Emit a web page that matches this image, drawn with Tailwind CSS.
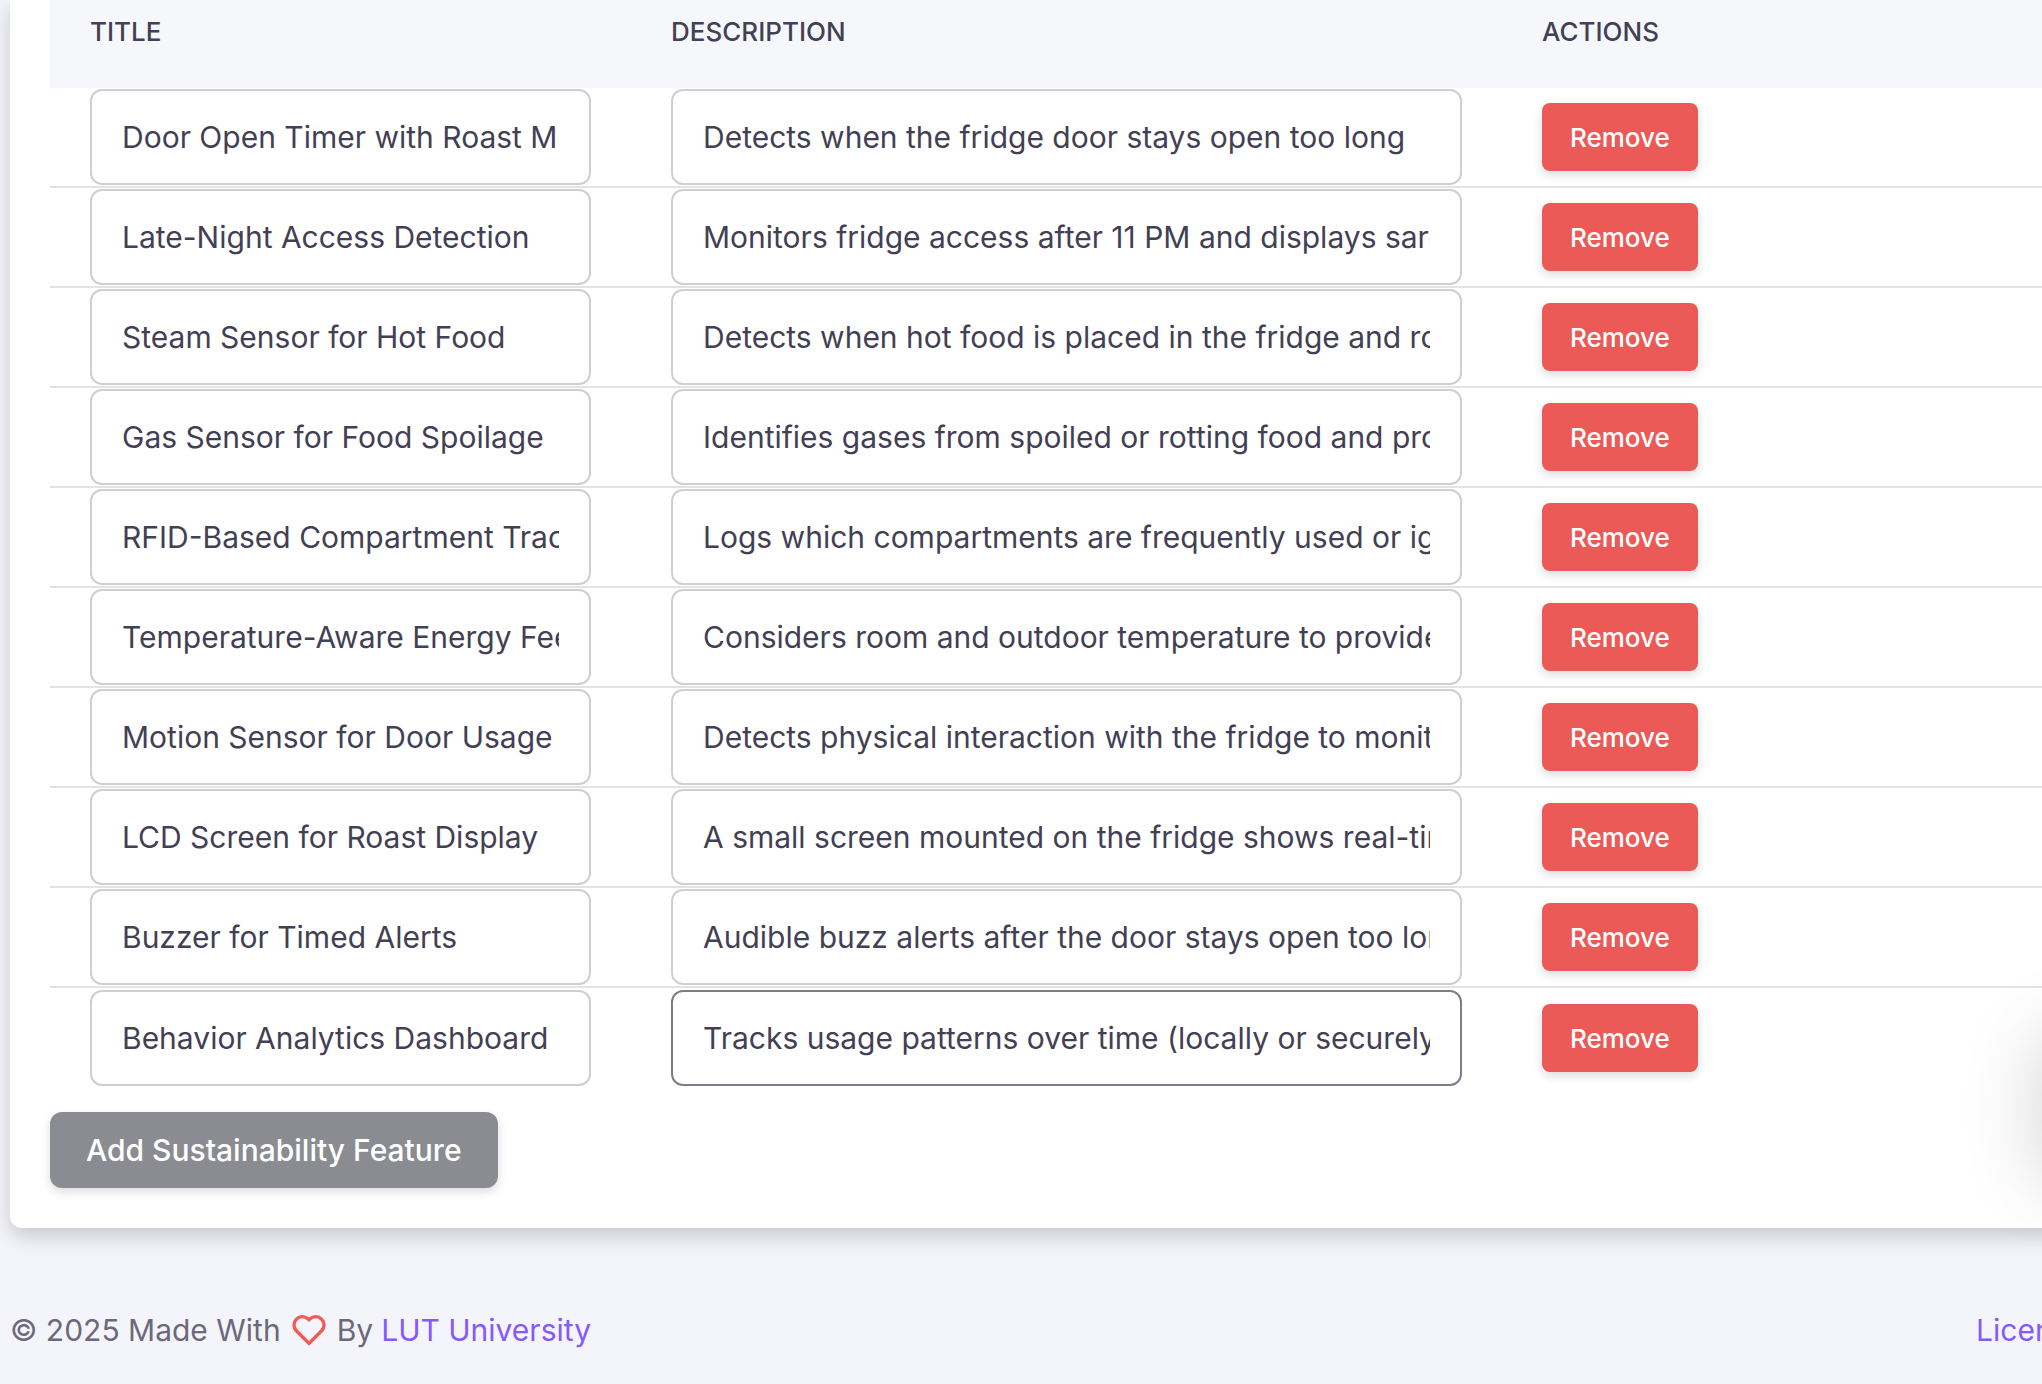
<!DOCTYPE html>
<html lang="en">
<head>
  <meta charset="UTF-8" />
  <meta name="viewport" content="width=device-width, initial-scale=1.0" />
  <title>Sustainability Features</title>
  <script src="https://cdn.jsdelivr.net/npm/@tailwindcss/browser@4"></script>
</head>
<body class="relative min-h-screen overflow-x-hidden bg-[#f4f5fa] font-['Inter',sans-serif] text-[#433f54]">
  <!-- the page is wider than the window, so it runs off the right edge -->
  <div class="-mr-11 pl-[10px]">
    <main class="rounded-b-xl bg-white px-10 pb-10 shadow-[0_8px_20px_rgba(46,38,61,0.22)]">
      <table class="w-full table-fixed border-separate border-spacing-0">
        <colgroup>
          <col class="w-[581px]" />
          <col class="w-[871px]" />
          <col />
        </colgroup>
        <thead class="bg-[#f6f7fb]">
          <tr class="h-[88px] text-left align-top text-[26px] leading-8 uppercase">
            <th class="px-10 pt-4 font-medium">Title</th>
            <th class="px-10 pt-4 font-medium">Description</th>
            <th class="px-10 pt-4 font-medium">Actions</th>
          </tr>
        </thead>
        <tbody id="features"></tbody>
      </table>
      <button type="button" class="mt-6 h-[76px] rounded-xl bg-[#8b8c92] px-9 text-[30px] font-medium text-white shadow-[0_4px_10px_rgba(46,38,61,0.16)]">Add Sustainability Feature</button>
    </main>

    <footer class="flex items-center justify-between pt-20 text-[30px] leading-[44px] text-[#6d687b]">
      <p class="flex items-center gap-2">
        <span>© 2025 Made With</span>
        <svg class="size-10 text-[#f05b56]" viewBox="0 0 24 24" fill="currentColor" aria-hidden="true">
          <path d="M12.001 4.529a5.998 5.998 0 0 1 8.242.228 6 6 0 0 1 .236 8.236l-8.48 8.492-8.478-8.492a6 6 0 0 1 8.48-8.464Zm6.826 1.641a3.998 3.998 0 0 0-5.49-.153l-1.335 1.198-1.336-1.197a4 4 0 0 0-5.686 5.605L12 18.654l7.02-7.03a4 4 0 0 0-.193-5.454Z" />
        </svg>
        <span>By</span>
        <a href="#" class="text-[#8659ff]">LUT University</a>
      </p>
      <a href="#" class="text-[#8659ff]">License</a>
    </footer>
  </div>

  <!-- floating button parked just past the right edge -->
  <div class="pointer-events-none absolute top-[1036px] -right-36 size-36 rounded-xl shadow-[0_0_80px_rgba(0,0,0,0.18)]"></div>

  <script>
    const features = [
      ["Door Open Timer with Roast Messages", "Detects when the fridge door stays open too long"],
      ["Late-Night Access Detection", "Monitors fridge access after 11 PM and displays sarcastic messages"],
      ["Steam Sensor for Hot Food", "Detects when hot food is placed in the fridge and roasts the user"],
      ["Gas Sensor for Food Spoilage", "Identifies gases from spoiled or rotting food and prompts cleanup"],
      ["RFID-Based Compartment Tracking", "Logs which compartments are frequently used or ignored"],
      ["Temperature-Aware Energy Feedback", "Considers room and outdoor temperature to provide feedback"],
      ["Motion Sensor for Door Usage", "Detects physical interaction with the fridge to monitor usage"],
      ["LCD Screen for Roast Display", "A small screen mounted on the fridge shows real-time messages"],
      ["Buzzer for Timed Alerts", "Audible buzz alerts after the door stays open too long"],
      ["Behavior Analytics Dashboard", "Tracks usage patterns over time (locally or securely in the cloud)"],
    ];

    const inputClass = "block h-24 w-full rounded-xl border-2 bg-white px-[30px] text-[30px] outline-none";

    function renderRow([title, description], index) {
      const last = index === features.length - 1;
      const cellClass = last ? "px-10" : "border-b-2 border-[#e3e3e5] px-10";
      return `
        <tr class="h-[100px]">
          <td class="${cellClass}">
            <input type="text" aria-label="Title ${index + 1}" value="${title}" class="${inputClass} border-[#cfced3]" />
          </td>
          <td class="${cellClass}">
            <input type="text" aria-label="Description ${index + 1}" value="${description}" class="${inputClass} ${last ? "border-[#7f7c8a]" : "border-[#cfced3]"}" />
          </td>
          <td class="${cellClass}">
            <button type="button" class="block h-[68px] rounded-lg bg-[#eb5a57] px-7 text-[26px] font-medium text-white shadow-[0_4px_10px_rgba(46,38,61,0.16)]">Remove</button>
          </td>
        </tr>
      `;
    }

    document.getElementById("features").innerHTML = features.map(renderRow).join("");
  </script>
</body>
</html>
